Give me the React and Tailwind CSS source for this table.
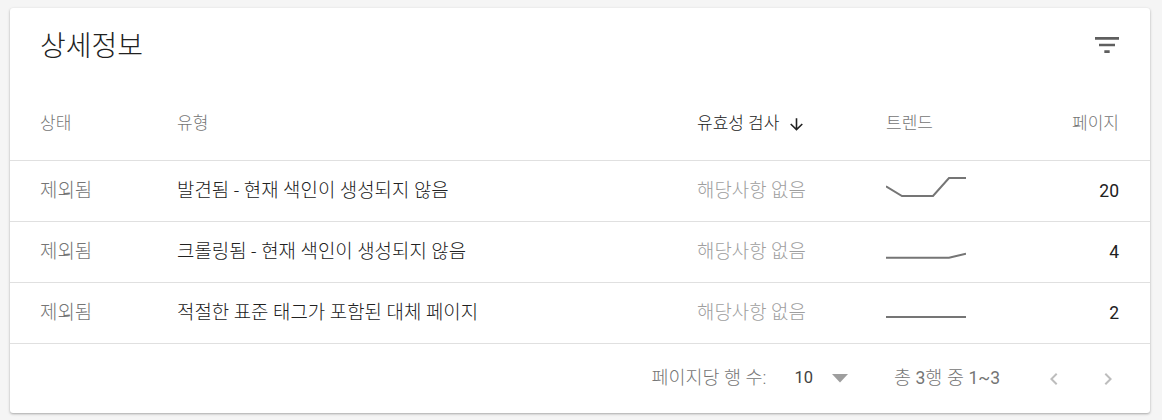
import React from "react";

const rows = [
  { status: "제외됨", type: "발견됨 - 현재 색인이 생성되지 않음", check: "해당사항 없음", pts: "0,9.3 16,19 47,19 63,1 80,1", pages: "20" },
  { status: "제외됨", type: "크롤링됨 - 현재 색인이 생성되지 않음", check: "해당사항 없음", pts: "0,19.7 63,19.7 80,15.7", pages: "4" },
  { status: "제외됨", type: "적절한 표준 태그가 포함된 대체 페이지", check: "해당사항 없음", pts: "0,18 80,18", pages: "2" },
];

export default function App() {
  return (
    <div className="w-[1162px] h-[420px] bg-[#f5f5f5] pt-[8px] pl-[10px] font-[Roboto,'Noto_Sans_CJK_KR',sans-serif] font-light">
      <div className="w-[1140px] h-[405px] bg-white rounded-[3px] shadow-[0_1px_3px_rgba(0,0,0,0.22),0_1px_2px_rgba(0,0,0,0.12)] flex flex-col">
        {/* Title */}
        <div className="h-[80px] flex justify-between items-start pl-[30px] pr-[27px] pt-[22px]">
          <div className="text-[28px] leading-[34px] text-[#212121]">상세정보</div>
          <svg width="32" height="32" viewBox="0 0 24 24" className="mt-[-1px]">
            <path d="M10 18h4v-2h-4v2zM3 6v2h18V6H3zm3 7h12v-2H6v2z" fill="#5f5f5f" />
          </svg>
        </div>

        {/* Header row */}
        <div className="h-[73px] flex items-center border-b border-[#e0e0e0] pl-[30px] pr-[31px] text-[17px] text-[#757575]">
          <div className="w-[137px]">상태</div>
          <div className="w-[520px]">유형</div>
          <div className="w-[189px] flex items-center text-[#212121]">
            <span>유효성 검사</span>
            <svg width="19" height="19" viewBox="0 0 24 24" className="ml-[8px]">
              <path d="M20 12l-1.41-1.41L13 16.17V4h-2v12.17l-5.58-5.59L4 12l8 8 8-8z" fill="#212121" />
            </svg>
          </div>
          <div className="flex-1">트렌드</div>
          <div className="text-right">페이지</div>
        </div>

        {/* Rows */}
        {rows.map((r, i) => (
          <div key={i} className="h-[61px] flex items-center border-b border-[#e0e0e0] pl-[30px] pr-[31px] text-[18.9px]">
            <div className="w-[137px] text-[#757575]">{r.status}</div>
            <div className="w-[520px] text-[#212121]">{r.type}</div>
            <div className="w-[189px] text-[#9e9e9e]">{r.check}</div>
            <div className="flex-1 flex items-center">
              <svg width="80" height="29" viewBox="0 0 80 29">
                <polyline points={r.pts} fill="none" stroke="#757575" strokeWidth="2" />
              </svg>
            </div>
            <div className="text-right text-[17.5px] font-normal text-[#212121]">{r.pages}</div>
          </div>
        ))}

        {/* Footer */}
        <div className="flex-1 flex items-center justify-end pr-[30px] text-[18.5px] text-[#757575]">
          <span>페이지당 행 수:</span>
          <span className="ml-[28px] text-[16.5px] font-normal text-[#424242]">10</span>
          <svg width="16" height="9" viewBox="0 0 16 9" className="ml-[19px]">
            <path d="M0 0 L16 0 L8 8.5 Z" fill="#9e9e9e" />
          </svg>
          <span className="ml-[46px]">
            총 <span className="font-normal text-[17.5px]">3</span>행 중 <span className="font-normal text-[17.5px]">1~3</span>
          </span>
          <svg width="24" height="24" viewBox="0 0 24 24" className="ml-[42px]">
            <path d="M15.41 7.41L14 6l-6 6 6 6 1.41-1.41L10.83 12z" fill="#bdbdbd" />
          </svg>
          <svg width="24" height="24" viewBox="0 0 24 24" className="ml-[30px]">
            <path d="M10 6L8.59 7.41 13.17 12l-4.58 4.59L10 18l6-6z" fill="#bdbdbd" />
          </svg>
        </div>
      </div>
    </div>
  );
}
